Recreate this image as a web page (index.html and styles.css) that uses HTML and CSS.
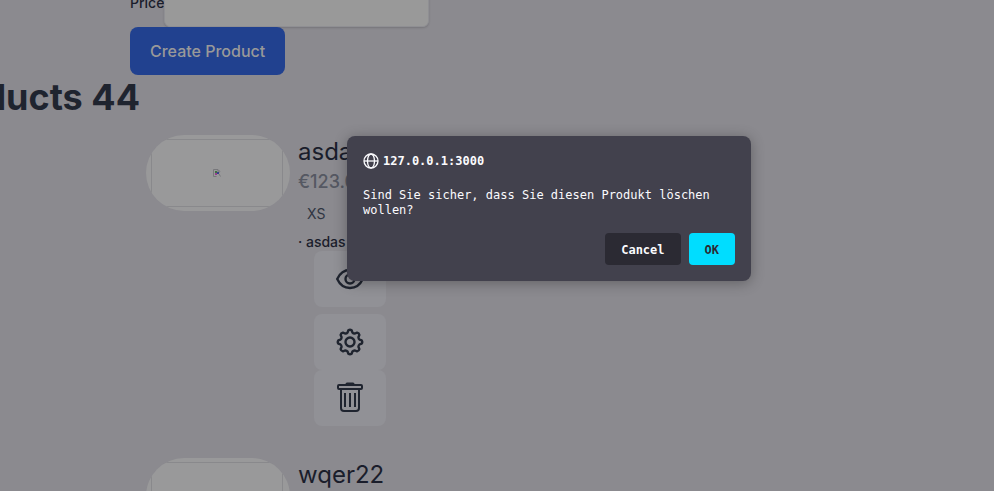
FILE: index.html
```html
<!DOCTYPE html>
<html lang="de">
<head>
<meta charset="utf-8">
<meta name="viewport" content="width=device-width, initial-scale=1">
<title>Products</title>
<link rel="stylesheet" href="styles.css">
</head>
<body>
<main class="page">
  <form class="product-form">
    <div class="field">
      <label for="price">Price</label>
      <input id="price" type="text">
    </div>
    <button class="create" type="button">Create Product</button>
  </form>
  <h1 class="heading">Products 44</h1>
  <section class="products">
    <article class="product">
      <div class="thumb"><div class="frame">
        <svg width="8" height="8" viewBox="0 0 8 8" aria-hidden="true">
          <path d="M.5 7.500V.5h4.500l2 2" fill="none" stroke="#77777b"/>
          <path d="M5 1v2h2M.5 7.500h3M6 5l1.500 2.500" fill="none" stroke="#77777b"/>
          <path d="M2 2h2v2H2z" fill="#3d7040"/>
          <path d="M4 3h2v2H4z" fill="#35408c"/>
          <path d="M2 4h2v2H2z" fill="#93408a"/>
        </svg>
      </div></div>
      <div class="details">
        <h2>asdasd</h2>
        <p class="amount">€123.00</p>
        <p class="size">XS</p>
        <p class="note">· asdas</p>
        <div class="actions">
          <button type="button" class="action view" aria-label="View">
            <svg width="30" height="30" viewBox="0 0 30 30" fill="none" stroke="#1f242f" stroke-width="2.4">
              <path d="M2.200 15C5 9 9.500 6 15 6S25 9 27.800 15C25 21 20.500 24 15 24S5 21 2.200 15z" stroke-linejoin="round"/>
              <circle cx="15" cy="15" r="4.500"/>
            </svg>
          </button>
          <button type="button" class="action" aria-label="Settings">
            <svg width="28" height="28" viewBox="-14 -14 28 28" fill="none" stroke="#1f242f" stroke-width="2.4" stroke-linejoin="round">
              <path d="M11.7-1.6Q12.800 0 11.700 1.600L9.600 2.400Q8.300 3.450 8.500 5L9.400 7.100Q9 9 7.100 9.400L5 8.500Q3.450 8.300 2.400 9.600L1.600 11.700Q0 12.800-1.600 11.700L-2.400 9.600Q-3.450 8.300-5 8.500L-7.100 9.400Q-9 9-9.400 7.100L-8.500 5Q-8.300 3.450-9.600 2.400L-11.700 1.600Q-12.800 0-11.700-1.600L-9.600-2.400Q-8.300-3.450-8.500-5L-9.400-7.100Q-9-9-7.100-9.400L-5-8.500Q-3.450-8.300-2.400-9.600L-1.600-11.700Q0-12.800 1.600-11.700L2.400-9.600Q3.450-8.300 5-8.500L7.100-9.400Q9-9 9.400-7.100L8.500-5Q8.300-3.450 9.600-2.400z"/>
              <circle r="4.500"/>
            </svg>
          </button>
          <button type="button" class="action" aria-label="Delete">
            <svg width="28" height="32" viewBox="0 1 28 32" fill="none" stroke="#1f242f" stroke-width="2" stroke-linejoin="round">
              <path d="M11 3h6" stroke-width="3" stroke-linecap="round"/>
              <rect x="2" y="4" width="24" height="4" rx="1"/>
              <path d="M5 8V27q0 3 3 3h12q3 0 3-3V8"/>
              <path d="M9 12v14M14 12v14M19 12v14"/>
            </svg>
          </button>
        </div>
      </div>
    </article>
    <article class="product">
      <div class="thumb"><div class="frame"></div></div>
      <div class="details"><h2>wqer22</h2></div>
    </article>
  </section>
</main>
<div class="dialog" role="alertdialog" aria-labelledby="origin" aria-describedby="message">
  <div class="origin">
    <svg width="16" height="16" viewBox="0 0 16 16" fill="none" stroke="#fbfbfe" stroke-width="1.3" aria-hidden="true">
      <circle cx="8" cy="8" r="7"/>
      <ellipse cx="8" cy="8" rx="3.500" ry="7"/>
      <path d="M1 8h14"/>
    </svg>
    <strong id="origin">127.0.0.1:3000</strong>
  </div>
  <p class="message" id="message">Sind Sie sicher, dass Sie diesen Produkt löschen wollen?</p>
  <div class="choices">
    <button type="button" class="cancel">Cancel</button>
    <button type="button" class="ok">OK</button>
  </div>
</div>
</body>
</html>
```

FILE: styles.css
```css
* {
  box-sizing: border-box;
}

body {
  margin: 0;
  background: #8b8a8f;
  color: #1a1d2b;
  font-family: Inter, "Liberation Sans", sans-serif;
}

h1,
h2,
p {
  margin: 0;
}

button {
  border: 0;
  font-family: inherit;
}

.page {
  height: 100vh;
  overflow: hidden;
}

/* The form is scrolled partly out of view, so it hangs from its lower edge. */
.product-form {
  display: flex;
  flex-direction: column;
  justify-content: flex-end;
  align-items: flex-start;
  height: 75px;
  padding-left: 130px;
}

.field {
  display: flex;
  flex: none;
  align-items: center;
  font-size: 14px;
  font-weight: 500;
}

.field input {
  width: 265px;
  height: 50px;
  border: 1px solid #8f8f93;
  border-radius: 6px;
  background: #999999;
  box-shadow: 0 1px 2px rgba(0, 0, 0, 0.15);
}

.create {
  flex: none;
  height: 48px;
  padding: 0 20px;
  border-radius: 8px;
  background: #21418f;
  color: #999999;
  font-size: 16px;
  font-weight: 500;
}

.heading {
  display: flex;
  justify-content: flex-end;
  width: 140px;
  color: #1f242f;
  font-size: 36px;
  line-height: 44px;
  font-weight: 700;
  white-space: nowrap;
}

.products {
  display: flex;
  flex-direction: column;
  gap: 32px;
  padding: 16px 16px 0 146px;
}

.product {
  display: flex;
  align-items: flex-start;
  gap: 8px;
}

.thumb {
  flex: none;
  width: 144px;
  height: 76px;
  padding: 4px 5px;
  border-radius: 38px;
  background: #99999a;
  overflow: hidden;
}

.frame {
  display: flex;
  align-items: center;
  justify-content: center;
  width: 132px;
  height: 68px;
  border: 1px solid #89898c;
}

.details h2 {
  font-size: 24px;
  line-height: 33px;
  font-weight: 400;
}

.amount {
  color: #555862;
  font-size: 18px;
  line-height: 28px;
  font-weight: 500;
}

.size {
  padding-left: 9px;
  color: #303542;
  font-size: 14px;
  line-height: 36px;
}

.note {
  height: 19px;
  font-size: 14px;
  line-height: 20px;
  font-weight: 500;
}

.actions {
  display: flex;
  flex-direction: column;
  padding-left: 16px;
}

.action {
  display: flex;
  align-items: center;
  justify-content: center;
  width: 72px;
  height: 56px;
  padding: 0;
  border-radius: 8px;
  background: #919196;
}

.view {
  margin-bottom: 7px;
}

.dialog {
  position: absolute;
  top: 136px;
  left: 347px;
  width: 404px;
  padding: 16px;
  border-radius: 8px;
  background: #42414d;
  box-shadow: 0 2px 14px rgba(0, 0, 0, 0.3);
  color: #fbfbfe;
  font-family: "DejaVu Sans Mono", monospace;
  font-size: 12px;
  line-height: 15px;
}

.origin {
  display: flex;
  align-items: center;
  gap: 4px;
  height: 18px;
}

.message {
  padding: 18px 0 15px;
}

.choices {
  display: flex;
  justify-content: flex-end;
  gap: 8px;
}

.choices button {
  height: 32px;
  padding: 2px 16px 0;
  border-radius: 4px;
  font-size: 12px;
  font-weight: 700;
}

.cancel {
  background: #2b2a33;
  color: #fbfbfe;
}

.ok {
  background: #00ddff;
  color: #2b2a33;
}
```
